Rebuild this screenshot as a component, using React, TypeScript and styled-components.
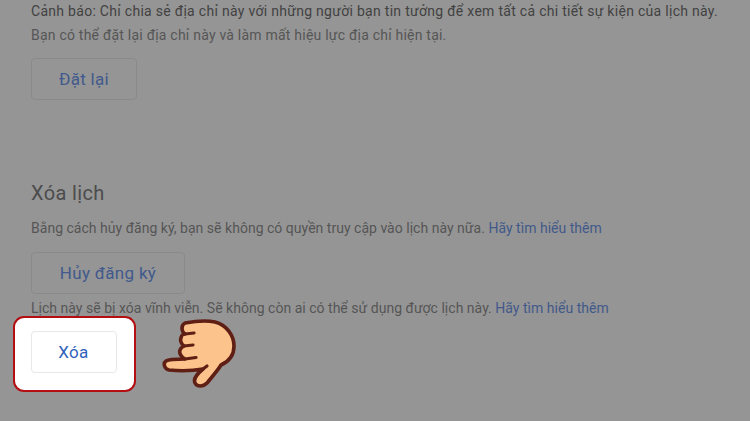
import React from "react";
import styled, { createGlobalStyle } from "styled-components";

const Global = createGlobalStyle`
  html, body { margin: 0; padding: 0; background: #959595; }
  #root { width: 750px; height: 421px; overflow: hidden; }
`;

const Page = styled.div`
  width: 750px;
  height: 421px;
  background: #959595;
  font-family: Roboto, "Noto Sans", sans-serif;
  overflow: hidden;
`;

const Section = styled.section`
  padding-left: 31px;
  display: flex;
  flex-direction: column;
  align-items: flex-start;
`;

const Warning = styled.p`
  margin: 0;
  padding-top: 1px;
  font-size: 14px;
  line-height: 20px;
  letter-spacing: 0.29px;
  white-space: nowrap;
  color: #424242;
`;

const Note = styled.p<{ $top?: number; $spacing?: number }>`
  margin: ${(p) => p.$top ?? 0}px 0 0;
  font-size: 14px;
  line-height: 20px;
  letter-spacing: ${(p) => p.$spacing ?? 0.02}px;
  white-space: nowrap;
  color: #555;
`;

const Anchor = styled.a`
  color: #42598a;
`;

const OutlineButton = styled.button<{ $w: number; $top?: number }>`
  display: block;
  width: ${(p) => p.$w}px;
  height: 42px;
  margin-top: ${(p) => p.$top ?? 0}px;
  box-sizing: border-box;
  border: 1px solid #8a8a8a;
  border-radius: 4px;
  background: transparent;
  color: #41598c;
  font-family: inherit;
  font-size: 17px;
  font-weight: 400;
  letter-spacing: 0.3px;
  padding: 0;
`;

const Title = styled.h2`
  margin: 80px 0 0;
  font-size: 20px;
  line-height: 26px;
  font-weight: 400;
  letter-spacing: 0.35px;
  color: #4c4c4c;
`;

const ActionRow = styled.div`
  display: flex;
  align-items: flex-start;
  margin: 0 0 0 13px;
`;

const Highlight = styled.div`
  box-sizing: border-box;
  width: 123px;
  height: 76px;
  margin-top: -2px;
  padding: 12.5px 15.5px;
  background: #fff;
  border: 2.5px solid #b30f12;
  border-radius: 11px;
`;

const DeleteButton = styled.button`
  display: block;
  width: 86px;
  height: 42px;
  box-sizing: border-box;
  border: 1px solid #e8e8e8;
  border-radius: 4px;
  background: #fff;
  color: #2f62bd;
  font-family: inherit;
  font-size: 17px;
  font-weight: 400;
  letter-spacing: 0.3px;
  padding: 0;
`;

const HandIcon = styled.svg`
  width: 78px;
  height: 72px;
  margin: 1px 0 0 24px;
  flex: none;
`;

export default function App() {
  return (
    <Page>
      <Global />
      <Section>
        <Warning>Cảnh báo: Chỉ chia sẻ địa chỉ này với những người bạn tin tưởng để xem tất cả chi tiết sự kiện của lịch này.</Warning>
        <Note $top={4} $spacing={0.22}>Bạn có thể đặt lại địa chỉ này và làm mất hiệu lực địa chỉ hiện tại.</Note>
        <OutlineButton $w={106} $top={13}>Đặt lại</OutlineButton>
        <Title>Xóa lịch</Title>
        <Note $top={12}>
          Bằng cách hủy đăng ký, bạn sẽ không có quyền truy cập vào lịch này nữa. <Anchor>Hãy tìm hiểu thêm</Anchor>
        </Note>
        <OutlineButton $w={154} $top={14}>Hủy đăng ký</OutlineButton>
        <Note $top={4}>
          Lịch này sẽ bị xóa vĩnh viễn. Sẽ không còn ai có thể sử dụng được lịch này. <Anchor>Hãy tìm hiểu thêm</Anchor>
        </Note>
      </Section>
      <ActionRow>
        <Highlight>
          <DeleteButton>Xóa</DeleteButton>
        </Highlight>
        <HandIcon viewBox="0 0 78 72" aria-hidden="true">
          <path
            d="M25 4 C36 2 48 1.5 55 3 C67 6 74 17 74 27 C74 36 70 42 61 46 C58 51 52 58 47 64 C43 68 37 68 35 64 C33 60 38 54 43 50 C32 52 18 52 9 51 C4 50 3 44 6 42 C9 40 17 40 25 40 C21 38 19 34 20 31 C21 29 22 28 24 27 C21 25 20 21 21 19 C21 17 23 15 25 15 C21 12 21 6 25 4 Z"
            fill="#fcc48c"
            stroke="#5f1f14"
            strokeWidth="3.6"
            strokeLinejoin="round"
          />
          <path
            d="M25 15 L34 14 M24 27 L33 26 M25 40 L36 38.5 M43 50 L47 47"
            fill="none"
            stroke="#5f1f14"
            strokeWidth="3.2"
            strokeLinecap="round"
          />
        </HandIcon>
      </ActionRow>
    </Page>
  );
}
